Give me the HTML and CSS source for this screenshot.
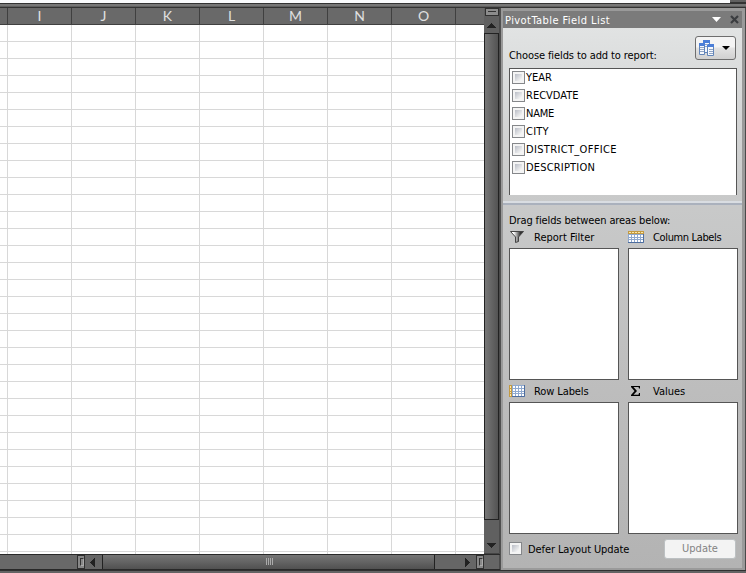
FILE: index.html
```
<!DOCTYPE html>
<html lang="en">
<head>
<meta charset="utf-8">
<title>PivotTable Field List</title>
<link rel="stylesheet" href="styles.css">
</head>
<body>
<div class="ribbon-edge"><div class="ribbon-corner"></div></div>
<main class="workspace">
  <section class="sheet">
    <div class="sheet-top">
      <div class="sheet-grid">
        <div class="col-heads"><span></span><span>I</span><span>J</span><span>K</span><span>L</span><span>M</span><span>N</span><span>O</span><span></span></div>
        <div class="cells"></div>
      </div>
      <div class="vscroll">
        <div class="split-v"><i></i></div>
        <div class="arrow"><svg width="9" height="5" viewBox="0 0 9 5"><path d="M4 0h1v1h1v1h1v1h1v1h1v1H0V4h1V3h1V2h1V1h1z" fill="#222"/></svg></div>
        <div class="vthumb"></div>
        <div class="arrow down"><svg width="9" height="5" viewBox="0 0 9 5"><path d="M0 0h9v1H8v1H7v1H6v1H5v1H4V4H3V3H2V2H1V1H0z" fill="#222"/></svg></div>
      </div>
    </div>
    <div class="hscroll">
      <div class="tabs"></div>
      <div class="split-h"><i></i></div>
      <div class="harrow"><svg width="5" height="9" viewBox="0 0 5 9"><path d="M0 4h1V3h1V2h1V1h1V0h1v9H4V8H3V7H2V6H1V5H0z" fill="#222"/></svg></div>
      <div class="hthumb"><i></i><i></i><i></i><i></i></div>
      <div class="htrack"><svg width="5" height="9" viewBox="0 0 5 9"><path d="M0 0h1v1h1v1h1v1h1v1h1v1H4v1H3v1H2v1H1v1H0z" fill="#222"/></svg></div>
      <div class="split-h end"><i></i></div>
      <div class="corner"></div>
    </div>
  </section>
  <aside class="pane">
    <header class="pane-title">
      <span class="t-title">PivotTable Field List</span>
      <svg class="title-icons" width="27" height="9" viewBox="0 0 27 9"><path d="M0 2h9L4.500 7z" fill="#fff"/><path d="M19 1l7 7M26 1l-7 7" stroke="#3b3d40" stroke-width="2.200"/></svg>
    </header>
    <div class="pane-body">
      <div class="choose">
        <span class="t-choose">Choose fields to add to report:</span>
        <button class="layout-btn"><svg width="39" height="22" viewBox="0 0 39 22">
          <g stroke="#6285b9" fill="#f5f8fd"><path d="M7.500 4.500h6v11h-6z"/><path d="M3.500 7.500h5v10h-5z"/><path d="M11.500 8.500h6v10h-6z"/></g>
          <path d="M7 3h7v3H7zM3 6h6v3H3zM11 7h7v3h-7z" fill="#4b7ed8"/>
          <path d="M4 10.500h4M4 12.500h4M4 14.500h4M9 7.500h3M9 9.500h2M13 12.500h4M13 14.500h4M13 16.500h4" stroke="#91a5c5"/>
          <path d="M26 9h8l-4 4z" fill="#000"/></svg></button>
      </div>
      <ul class="fields">
        <li><i class="box"></i><span class="f-year">YEAR</span></li>
        <li><i class="box"></i><span class="f-recv">RECVDATE</span></li>
        <li><i class="box"></i><span class="f-name">NAME</span></li>
        <li><i class="box"></i><span class="f-city">CITY</span></li>
        <li><i class="box"></i><span class="f-office">DISTRICT_OFFICE</span></li>
        <li><i class="box"></i><span class="f-desc">DESCRIPTION</span></li>
      </ul>
      <div class="splitter"></div>
      <div class="drag"><span class="t-drag">Drag fields between areas below:</span></div>
      <div class="areas">
        <div class="area">
          <div class="area-head"><svg width="16" height="14" viewBox="0 0 16 14"><defs><linearGradient id="fg"><stop offset=".25" stop-color="#fff"/><stop offset=".75" stop-color="#333"/></linearGradient></defs><path d="M1.500 1.500h13L9.500 7v4.500l-3 1V7z" fill="url(#fg)" stroke="#444"/></svg><span class="t-filter">Report Filter</span></div>
          <div class="drop"></div>
        </div>
        <div class="area">
          <div class="area-head"><svg width="16" height="14" viewBox="0 0 16 14"><path d="M0 1h16v12H0z" fill="#8fa9cf"/><path d="M0 1h16v3H0z" fill="#c39a42"/><path d="M1 2h2v1H1zm3 0h2v1H4zm3 0h2v1H7zm3 0h2v1h-2zm3 0h2v1h-2z" fill="#ffe9a8"/><path d="M1 5h2v2H1zm3 0h2v2H4zm3 0h2v2H7zm3 0h2v2h-2zm3 0h2v2h-2zM1 8h2v1H1zm3 0h2v1H4zm3 0h2v1H7zm3 0h2v1h-2zm3 0h2v1h-2zM1 10h2v2H1zm3 0h2v2H4zm3 0h2v2H7zm3 0h2v2h-2zm3 0h2v2h-2z" fill="#fff"/><path d="M0 12.500h15.500V4" fill="none" stroke="#4d6d9e"/></svg><span class="t-column">Column Labels</span></div>
          <div class="drop"></div>
        </div>
        <div class="area">
          <div class="area-head"><svg width="16" height="14" viewBox="0 0 16 14"><path d="M0 1h16v12H0z" fill="#8fa9cf"/><path d="M0 1h3v12H0z" fill="#c39a42"/><path d="M1 2h1v2H1zm0 3h1v2H1zm0 3h1v1H1zm0 2h1v2H1z" fill="#ffe9a8"/><path d="M4 2h2v2H4zm3 0h2v2H7zm3 0h2v2h-2zm3 0h2v2h-2zM4 5h2v2H4zm3 0h2v2H7zm3 0h2v2h-2zm3 0h2v2h-2zM4 8h2v1H4zm3 0h2v1H7zm3 0h2v1h-2zm3 0h2v1h-2zM4 10h2v2H4zm3 0h2v2H7zm3 0h2v2h-2zm3 0h2v2h-2z" fill="#fff"/><path d="M3 12.500h12.500V1" fill="none" stroke="#4d6d9e"/></svg><span class="t-row">Row Labels</span></div>
          <div class="drop"></div>
        </div>
        <div class="area">
          <div class="area-head"><svg width="16" height="14" viewBox="0 0 16 14"><path d="M3 2h9v2.500h-1L10.500 3H5.500L9 7l-3.500 3.700h5l.5-1.700h1v3H3v-1l3.500-4L3 3z" fill="#000"/></svg><span class="t-values">Values</span></div>
          <div class="drop"></div>
        </div>
      </div>
      <div class="pane-foot"><i class="box"></i><span class="t-defer">Defer Layout Update</span><button class="update"><span class="t-update">Update</span></button></div>
    </div>
  </aside>
</main>
<div class="bottom-edge"></div>
</body>
</html>
```
FILE: styles.css
```
* { box-sizing: border-box; }
body { margin: 0; width: 746px; height: 573px; overflow: hidden; background: #676767; font: 11px/14px "DejaVu Sans Condensed", "DejaVu Sans", sans-serif; font-stretch: condensed; color: #000; }
span { white-space: nowrap; }
.ribbon-edge { height: 8px; background: linear-gradient(#fafbfd 0 3px, #333 3px 4px, #777 4px 6px, #606060 6px 7px, #333 7px); }
.ribbon-corner { width: 16px; height: 3px; margin-left: 730px; background: linear-gradient(#606060 0 2px, #333 2px); }
.workspace { display: flex; height: 562px; }
.sheet { width: 500px; }
.sheet-top { display: flex; height: 546px; }
.sheet-grid { width: 484px; }
.col-heads { display: grid; grid-template-columns: 8px repeat(8, 64px); height: 17px; overflow: hidden; background: #696969; border-bottom: 1px solid #404040; color: #e0e0e0; font: 14px/16px Lato, sans-serif; text-align: center; }
.col-heads span { border-right: 1px solid #404040; }
.cells { height: 529px; background: repeating-linear-gradient(90deg, transparent 0 7px, #d8d8d8 7px 8px, transparent 8px 64px), repeating-linear-gradient(#fff 0 16px, #d8d8d8 16px 17px); }
.vscroll { width: 16px; display: flex; flex-direction: column; background: #606060; border-right: 1px solid #4b4b4b; }
.split-v { height: 8px; margin: 0 0 0 1px; border: 1px solid #303030; background: #8c8c8c; padding: 2px; }
.split-v i { display: block; height: 2px; border: 1px solid #aaa; border-width: 1px 0 0; border-top-color: #333; }
.arrow { height: 17px; display: flex; justify-content: center; align-items: center; padding-top: 1px; }
.vthumb { height: 487px; border: 1px solid #222; background: linear-gradient(90deg, #777, #535353); }
.arrow.down { flex: 1; align-items: flex-start; padding-top: 23px; border-bottom: 1px solid #444; }
.hscroll { display: flex; height: 16px; background: #666; border-top: 1px solid #292929; border-bottom: 1px solid #292929; }
.tabs { width: 77px; background: #696969; }
.split-h { width: 8px; border: 1px solid #303030; background: #888; padding: 2px; }
.split-h i { display: block; width: 4px; height: 8px; background: #888; border: 1px solid #aaa; border-left-color: #333; border-top-color: #333; }
.harrow { width: 17px; display: flex; align-items: center; padding-left: 5px; }
.hthumb { width: 333px; display: flex; justify-content: center; gap: 1px; padding: 3px 0 0 1px; background: linear-gradient(#767676, #515151); border: solid #222; border-width: 0 1px; }
.hthumb i { width: 1px; height: 7px; background: #aaa; }
.htrack { width: 41px; display: flex; align-items: center; padding-left: 30px; }
.corner { flex: 1; border-right: 1px solid #4b4b4b; }
.pane { width: 246px; padding: 3px 3px 2px 2px; background: #9a9a9a; border-left: 1px solid #505050; border-right: 1px solid #4a4a4a; }
.pane-title { display: flex; justify-content: space-between; align-items: center; height: 17px; padding: 0 3px 0 2px; color: #fff; background: #7b7b7b; }
.t-title { letter-spacing: .43px; padding-top: 2px; }
.title-icons { display: block; }
.pane-body { height: 540px; background: linear-gradient(#e1e3e3 0, #c9caca 165px, #bebebe 345px, #b3b3b3 100%); }
.choose { height: 40px; display: flex; justify-content: space-between; padding: 8px 6px 0 6px; }
.t-choose { margin-top: 13px; letter-spacing: -.1px; }
button { font: inherit; padding: 0; }
.layout-btn { width: 41px; height: 24px; border: 1px solid #6e6e6e; border-radius: 3px; background: linear-gradient(#f4f4f4 0 45%, #e3e3e3 50%, #d0d0d0); }
.layout-btn svg { display: block; }
.fields { list-style: none; height: 127px; width: 228px; margin: 0 0 0 6px; padding: 0 0 0 2px; background: #fff; border: 1px solid #555; border-bottom: 0; }
.fields li { display: flex; align-items: flex-start; height: 18px; padding-top: 2px; gap: 1px; }
.f-city { letter-spacing: .25px; }
.f-name { letter-spacing: -.2px; }
.f-office { letter-spacing: .34px; }
.f-desc { letter-spacing: .18px; }
.box { display: block; flex: none; width: 13px; height: 13px; border: 1px solid #85878a; background: linear-gradient(135deg, #b9bdc6, #f4f4f4 85%) 2px 2px / 7px 7px no-repeat #f4f4f4; }
.splitter { height: 5px; margin-top: 6px; background: linear-gradient(#d9dde2 0 2px, #aab1bd 2px 4px, #c8c9ca 4px); }
.drag { height: 23px; padding: 8px 0 0 6px; }
.t-drag { letter-spacing: -.12px; }
.areas { display: grid; grid-template-columns: 110px 110px; column-gap: 9px; margin-left: 6px; }
.area { height: 154px; }
.area-head { display: flex; align-items: center; height: 19px; gap: 9px; padding-bottom: 3px; }
.area-head span { padding-top: 2px; }
.t-column { letter-spacing: -.36px; }
.t-row { letter-spacing: -.1px; }
.drop { height: 132px; background: #fff; border: 1px solid #555; }
.pane-foot { display: flex; align-items: center; height: 20px; margin-top: 2px; padding: 0 6px 0 6px; }
.pane-foot .box { margin-bottom: 1px; }
.t-defer { margin: 1px 0 0 6px; letter-spacing: -.1px; }
.update { width: 72px; height: 20px; margin-left: auto; border: 1px solid #bcc0c2; border-radius: 3px; background: #f3f3f3; color: #838383; }
.bottom-edge { height: 3px; background: linear-gradient(#303030 0 1px, #636363 1px); }
```
